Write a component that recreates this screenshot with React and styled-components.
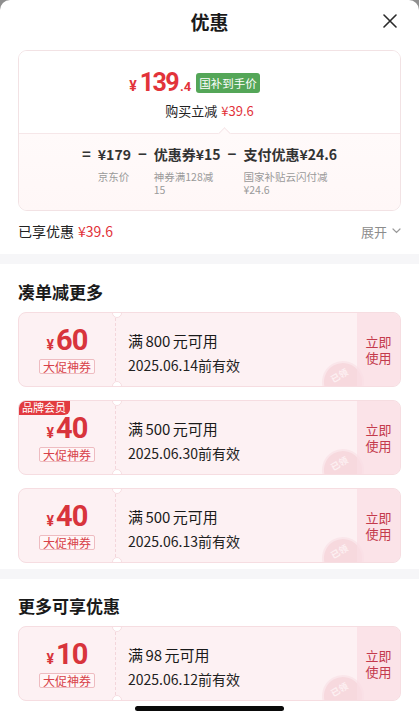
import React from 'react';
import styled, { createGlobalStyle } from 'styled-components';

const GlobalStyle = createGlobalStyle`
  html, body {
    margin: 0;
    padding: 0;
    background: #8f8f8f;
  }
  body {
    font-family: "Noto Sans CJK SC", "Noto Sans", sans-serif;
    color: #1a1a1a;
  }
  * {
    box-sizing: border-box;
  }
`;

const RED = '#e2333a';

const coupons = [
  { id: 1, amount: 60, limit: 800, date: '2025.06.14' },
  { id: 2, amount: 40, limit: 500, date: '2025.06.30', member: true },
  { id: 3, amount: 40, limit: 500, date: '2025.06.13' },
];

const moreCoupons = [{ id: 4, amount: 10, limit: 98, date: '2025.06.12' }];

const Sheet = styled.div`
  width: 419px;
  height: 720px;
  background: #fff;
  border-radius: 10px 10px 0 0;
  overflow: hidden;
  position: relative;
`;

const Header = styled.div`
  height: 42px;
  display: flex;
  align-items: center;
  justify-content: center;
  position: relative;
`;

const Title = styled.div`
  font-size: 19px;
  font-weight: 700;
  color: #1a1a1a;
`;

const CloseButton = styled.div`
  position: absolute;
  right: 22px;
  top: 14px;
  width: 14px;
  height: 14px;
  display: flex;
`;

const PriceCard = styled.div`
  margin: 8px 18px 0;
  border: 1px solid #f2e2e4;
  border-radius: 9px;
  overflow: hidden;
`;

const PriceTop = styled.div`
  background: #fff;
  padding: 17px 0 12px;
  display: flex;
  flex-direction: column;
  align-items: center;
`;

const PriceRow = styled.div`
  display: flex;
  align-items: center;
  height: 28px;
  margin-right: 30px;
`;

const PriceValue = styled.div`
  color: ${RED};
  font-family: Roboto, "Noto Sans", sans-serif;
  font-weight: 700;
  display: flex;
  align-items: baseline;
  margin-right: 5px;
`;

const Yen = styled.span`
  font-size: ${(p) => p.$size || 14}px;
  margin-right: ${(p) => (p.$size ? 2 : 3)}px;
`;

const BigNum = styled.span`
  font-size: ${(p) => p.$size || 25}px;
  letter-spacing: ${(p) => (p.$size ? -1 : -1.6)}px;
  line-height: 1;
`;

const Decimal = styled.span`
  font-size: 13px;
  margin-left: 2px;
`;

const GreenBadge = styled.div`
  background: #54a658;
  color: #fff;
  font-size: 11.5px;
  height: 20px;
  line-height: 20px;
  padding: 0 3px;
  border-radius: 3px;
  margin-top: 1px;
`;

const ReduceRow = styled.div`
  margin-top: 5px;
  font-size: 13px;
  line-height: 20px;
  color: #222;
`;

const RedText = styled.span`
  color: ${RED};
  margin-left: 4px;
`;

const PriceBottom = styled.div`
  position: relative;
  border-top: 1px solid #f6e7e9;
  background: linear-gradient(#fffafa, #fff7f7);
  padding: 10px 0 14px;
  display: flex;
  justify-content: center;

  &::before {
    content: '';
    position: absolute;
    left: 201px;
    top: -5px;
    width: 8px;
    height: 8px;
    background: #fffafa;
    border-top: 1px solid #f6e7e9;
    border-left: 1px solid #f6e7e9;
    transform: rotate(45deg);
  }
`;

const Formula = styled.div`
  display: flex;
  align-items: flex-start;
  gap: 7px;
`;

const Operator = styled.div`
  font-size: 15px;
  font-weight: 600;
  line-height: 20px;
  color: #333;
`;

const Term = styled.div`
  display: flex;
  flex-direction: column;
`;

const TermValue = styled.div`
  font-size: 14px;
  font-weight: 600;
  line-height: 20px;
  color: #333;
  white-space: nowrap;
`;

const TermLabel = styled.div`
  width: 0;
  min-width: 100%;
  margin-top: 6px;
  font-size: 10.5px;
  line-height: 13px;
  color: #9a9a9a;
  white-space: nowrap;
`;

const EnjoyRow = styled.div`
  display: flex;
  justify-content: space-between;
  align-items: center;
  margin: 10px 18px 0;
  height: 20px;
  font-size: 14px;
  color: #222;
`;

const Expand = styled.div`
  display: flex;
  align-items: center;
  gap: 5px;
  font-size: 13px;
  color: #8c8c8c;
`;

const Band = styled.div`
  height: 10px;
  background: #f6f6f8;
  margin-top: ${(p) => p.$top}px;
`;

const SectionTitle = styled.div`
  margin: ${(p) => p.$top}px 18px 0;
  font-size: 17px;
  font-weight: 700;
  line-height: 24px;
  color: #1a1a1a;
`;

const CouponList = styled.div`
  margin: 8px 18px 0;
  display: flex;
  flex-direction: column;
  gap: 13px;
`;

const CouponCard = styled.div`
  position: relative;
  height: 75px;
  display: flex;
  background: #fdf1f3;
  border: 1px solid #f6dde1;
  border-radius: 8px;
  overflow: hidden;

  &::before,
  &::after {
    content: '';
    position: absolute;
    left: 93px;
    width: 8px;
    height: 8px;
    border-radius: 50%;
    background: #fff;
    border: 1px solid #f6dde1;
  }
  &::before {
    top: -5px;
  }
  &::after {
    bottom: -5px;
  }
`;

const Stub = styled.div`
  width: 97px;
  flex-shrink: 0;
  border-right: 1px dashed #f3d6db;
  display: flex;
  flex-direction: column;
  align-items: center;
  padding-top: 13px;
`;

const CouponPrice = styled.div`
  color: #d8343c;
  font-family: Roboto, "Noto Sans", sans-serif;
  font-weight: 700;
  display: flex;
  align-items: baseline;
  height: 30px;
  line-height: 30px;
`;

const PromoTag = styled.div`
  margin-top: 3px;
  font-size: 12px;
  line-height: 13px;
  padding: 0 3px;
  color: #d8434a;
  border: 1px solid #eebcc1;
  background: #fff6f7;
  border-radius: 2px;
`;

const CouponBody = styled.div`
  flex: 1;
  padding: 18px 0 0 12px;
`;

const CouponLimit = styled.div`
  font-size: 15px;
  line-height: 20px;
  color: #1a1a1a;
  word-spacing: -1px;
`;

const CouponDate = styled.div`
  margin-top: 4px;
  font-size: 14px;
  line-height: 20px;
  color: #222;
`;

const UseAction = styled.div`
  position: relative;
  z-index: 1;
  width: 43px;
  flex-shrink: 0;
  background: rgba(250, 222, 228, 0.75);
  display: flex;
  align-items: center;
  justify-content: center;
  font-size: 13px;
  line-height: 16px;
  color: #c43a4c;
  text-align: center;
`;

const Stamp = styled.div`
  position: absolute;
  right: 36px;
  bottom: -17px;
  width: 42px;
  height: 42px;
  border-radius: 50%;
  background: #f7d9de;
  border: 2px solid #fae6ea;
  display: flex;
  align-items: flex-start;
  justify-content: center;
  padding-top: 7px;
  color: #fdf0f2;
  font-size: 9px;
  line-height: 10px;
  font-weight: 700;
  transform: rotate(-30deg);
`;

const MemberTag = styled.div`
  position: absolute;
  left: -1px;
  top: -1px;
  height: 15px;
  line-height: 15px;
  padding: 0 4px;
  background: #e23b40;
  color: #fff;
  font-size: 11px;
  border-radius: 7px 0 6px 0;
  z-index: 1;
`;

const HomeBar = styled.div`
  position: fixed;
  left: 135px;
  bottom: 9px;
  width: 149px;
  height: 5px;
  border-radius: 3px;
  background: #0a0a0a;
`;

const CloseIcon = () => (
  <svg width="14" height="14" viewBox="0 0 14 14">
    <path d="M1 1L13 13M13 1L1 13" stroke="#2a2a2a" strokeWidth="1.6" strokeLinecap="round" />
  </svg>
);

const ChevronDown = () => (
  <svg width="9" height="6" viewBox="0 0 9 6">
    <path d="M1 1L4.5 4.5L8 1" stroke="#9a9a9a" strokeWidth="1.2" fill="none" strokeLinecap="round" />
  </svg>
);

const Coupon = ({ coupon }) => (
  <CouponCard>
    {coupon.member && <MemberTag>品牌会员</MemberTag>}
    <Stub>
      <CouponPrice>
        <Yen $size={14}>¥</Yen>
        <BigNum $size={29}>{coupon.amount}</BigNum>
      </CouponPrice>
      <PromoTag>大促神券</PromoTag>
    </Stub>
    <CouponBody>
      <CouponLimit>满 {coupon.limit} 元可用</CouponLimit>
      <CouponDate>{coupon.date}前有效</CouponDate>
    </CouponBody>
    <UseAction>
      立即
      <br />
      使用
    </UseAction>
    <Stamp>已领</Stamp>
  </CouponCard>
);

function App() {
  return (
    <>
      <GlobalStyle />
      <Sheet>
        <Header>
          <Title>优惠</Title>
          <CloseButton>
            <CloseIcon />
          </CloseButton>
        </Header>

        <PriceCard>
          <PriceTop>
            <PriceRow>
              <PriceValue>
                <Yen>¥</Yen>
                <BigNum>139</BigNum>
                <Decimal>.4</Decimal>
              </PriceValue>
              <GreenBadge>国补到手价</GreenBadge>
            </PriceRow>
            <ReduceRow>
              购买立减<RedText>¥39.6</RedText>
            </ReduceRow>
          </PriceTop>
          <PriceBottom>
            <Formula>
              <Operator>=</Operator>
              <Term>
                <TermValue>¥179</TermValue>
                <TermLabel>京东价</TermLabel>
              </Term>
              <Operator>−</Operator>
              <Term>
                <TermValue>优惠券¥15</TermValue>
                <TermLabel>
                  神券满128减
                  <br />
                  15
                </TermLabel>
              </Term>
              <Operator>−</Operator>
              <Term>
                <TermValue>支付优惠¥24.6</TermValue>
                <TermLabel>
                  国家补贴云闪付减
                  <br />
                  ¥24.6
                </TermLabel>
              </Term>
            </Formula>
          </PriceBottom>
        </PriceCard>

        <EnjoyRow>
          <span>
            已享优惠<RedText>¥39.6</RedText>
          </span>
          <Expand>
            展开
            <ChevronDown />
          </Expand>
        </EnjoyRow>

        <Band $top={13} />

        <SectionTitle $top={16}>凑单减更多</SectionTitle>
        <CouponList>
          {coupons.map((c) => (
            <Coupon key={c.id} coupon={c} />
          ))}
        </CouponList>

        <Band $top={6} />

        <SectionTitle $top={15}>更多可享优惠</SectionTitle>
        <CouponList>
          {moreCoupons.map((c) => (
            <Coupon key={c.id} coupon={c} />
          ))}
        </CouponList>

        <HomeBar />
      </Sheet>
    </>
  );
}

export default App;
